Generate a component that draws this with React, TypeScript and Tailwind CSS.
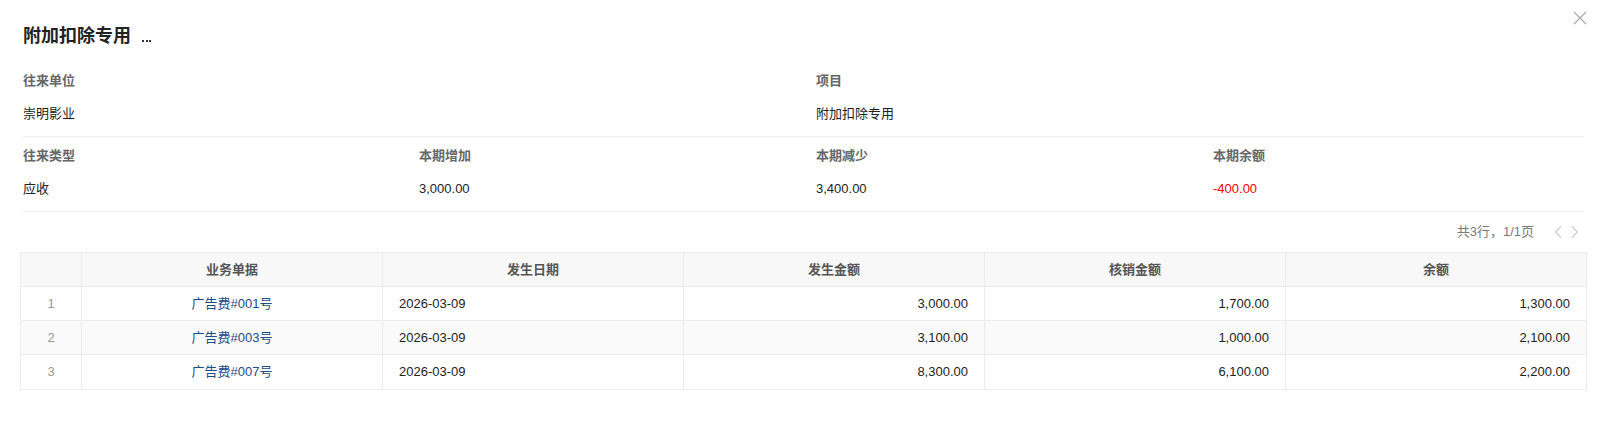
import React from 'react';

const rows = [
  { no: 1, doc: '广告费#001号', date: '2026-03-09', amount: '3,000.00', settled: '1,700.00', balance: '1,300.00' },
  { no: 2, doc: '广告费#003号', date: '2026-03-09', amount: '3,100.00', settled: '1,000.00', balance: '2,100.00' },
  { no: 3, doc: '广告费#007号', date: '2026-03-09', amount: '8,300.00', settled: '6,100.00', balance: '2,200.00' },
];

const cols = 'grid grid-cols-[61px_301px_301px_301px_301px_1fr]';

const Field = ({ label, value, red }: { label: string; value: string; red?: boolean }) => (
  <div>
    <div className="leading-5 font-bold text-[#666]">{label}</div>
    <div className={`mt-[13px] leading-5 ${red ? 'text-[#ff0000]' : 'text-[#222]'}`}>{value}</div>
  </div>
);

const App: React.FC = () => {
  return (
    <div className="relative min-h-[429px] w-[1597px] bg-white pl-5 pr-[10px] text-[13px] font-['Liberation_Sans','Noto_Sans_CJK_SC',sans-serif]">
      <button className="absolute right-[10px] top-[11px] h-[14px] w-[14px]">
        <svg viewBox="0 0 14 14" className="h-[14px] w-[14px]" fill="none" stroke="#aaa" strokeWidth="1.2">
          <path d="M1 1L13 13M13 1L1 13" />
        </svg>
      </button>

      <div className="mx-[3px]">
        <div className="flex items-center pt-6">
          <h1 className="h-6 text-[18px] font-bold leading-6 text-[#222]">附加扣除专用</h1>
          <div className="ml-[11px] mt-[10px] flex gap-[1.5px]">
            <span className="h-[2px] w-[2px] bg-[#333]" />
            <span className="h-[2px] w-[2px] bg-[#333]" />
            <span className="h-[2px] w-[2px] bg-[#333]" />
          </div>
        </div>

        <div className="mt-[14px] grid grid-cols-[396px_397px_397px_1fr] border-b border-[#eee] pb-3 pt-[9px]">
          <div className="col-span-2">
            <Field label="往来单位" value="崇明影业" />
          </div>
          <div className="col-span-2">
            <Field label="项目" value="附加扣除专用" />
          </div>
        </div>

        <div className="grid grid-cols-[396px_397px_397px_1fr] border-b border-[#eee] pb-3 pt-[9px]">
          <Field label="往来类型" value="应收" />
          <Field label="本期增加" value="3,000.00" />
          <Field label="本期减少" value="3,400.00" />
          <Field label="本期余额" value="-400.00" red />
        </div>
      </div>

      <div className="flex h-10 items-center justify-end pr-2">
        <span className="text-[#7a7a7a]">共3行，1/1页</span>
        <svg viewBox="0 0 8 12" className="ml-5 h-3 w-2" fill="none" stroke="#ccc" strokeWidth="1.2">
          <path d="M7 0.5L1.5 6L7 11.5" />
        </svg>
        <svg viewBox="0 0 8 12" className="ml-[9px] h-3 w-2" fill="none" stroke="#ccc" strokeWidth="1.2">
          <path d="M1 0.5L6.5 6L1 11.5" />
        </svg>
      </div>

      <div className="border border-[#ebebeb]">
        <div className={`${cols} h-[34px] border-b border-[#ebebeb] bg-[#f8f8f8] font-bold text-[#555]`}>
          <div className="border-r border-[#ebebeb]" />
          {['业务单据', '发生日期', '发生金额', '核销金额', '余额'].map((h, i) => (
            <div
              key={h}
              className={`flex items-center justify-center ${i < 4 ? 'border-r border-[#ebebeb]' : ''}`}
            >
              {h}
            </div>
          ))}
        </div>
        {rows.map((r, idx) => (
          <div
            key={r.no}
            className={`${cols} h-[34px] text-[#222] ${idx < rows.length - 1 ? 'border-b border-[#ebebeb]' : ''} ${
              idx % 2 === 1 ? 'bg-[#fafafa]' : 'bg-white'
            }`}
          >
            <div className="flex items-center justify-center border-r border-[#ebebeb] text-[#999]">{r.no}</div>
            <div className="flex items-center justify-center border-r border-[#ebebeb] text-[#1b4c8c]">{r.doc}</div>
            <div className="flex items-center border-r border-[#ebebeb] pl-4">{r.date}</div>
            <div className="flex items-center justify-end border-r border-[#ebebeb] pr-4">{r.amount}</div>
            <div className="flex items-center justify-end border-r border-[#ebebeb] pr-4">{r.settled}</div>
            <div className="flex items-center justify-end pr-4">{r.balance}</div>
          </div>
        ))}
      </div>
    </div>
  );
};

export default App;
